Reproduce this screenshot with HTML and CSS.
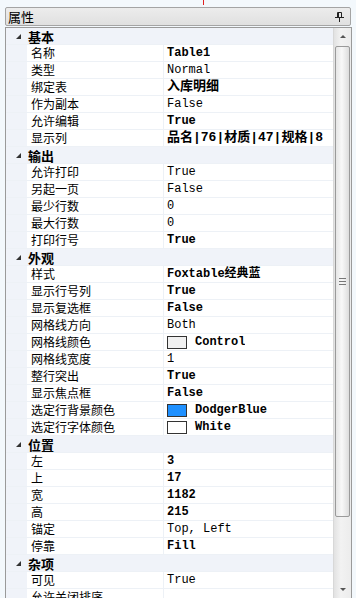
FILE: index.html
```html
<!DOCTYPE html>
<html lang="zh-CN">
<head>
  <meta charset="UTF-8" />
  <title>属性</title>
  <link rel="stylesheet" href="styles.css">
</head>
<body>
  <div class="mark"></div>
  <div class="titlebar">
    <span>属性</span>
    <svg class="pin" width="9" height="10" viewBox="0 0 9 10">
      <path d="M2.5 0.5h4v5h-4z M3.5 1v4.5" fill="none" stroke="#222" stroke-width="1"/>
      <path d="M0 5.5h9 M4.5 5.5v4.5" stroke="#222" stroke-width="1"/>
    </svg>
  </div>
  <div class="grid">
    <div class="rows">
      <div class="cat"><i class="tri"></i><span>基本</span></div>
      <div class="row"><span class="name">名称</span><span class="val b">Table1</span></div>
      <div class="row"><span class="name">类型</span><span class="val">Normal</span></div>
      <div class="row"><span class="name">绑定表</span><span class="val b zh">入库明细</span></div>
      <div class="row"><span class="name">作为副本</span><span class="val">False</span></div>
      <div class="row"><span class="name">允许编辑</span><span class="val b">True</span></div>
      <div class="row"><span class="name">显示列</span><span class="val b zh">品名|76|材质|47|规格|8</span></div>

      <div class="cat"><i class="tri"></i><span>输出</span></div>
      <div class="row"><span class="name">允许打印</span><span class="val">True</span></div>
      <div class="row"><span class="name">另起一页</span><span class="val">False</span></div>
      <div class="row"><span class="name">最少行数</span><span class="val">0</span></div>
      <div class="row"><span class="name">最大行数</span><span class="val">0</span></div>
      <div class="row"><span class="name">打印行号</span><span class="val b">True</span></div>

      <div class="cat"><i class="tri"></i><span>外观</span></div>
      <div class="row"><span class="name">样式</span><span class="val b">Foxtable经典蓝</span></div>
      <div class="row"><span class="name">显示行号列</span><span class="val b">True</span></div>
      <div class="row"><span class="name">显示复选框</span><span class="val b">False</span></div>
      <div class="row"><span class="name">网格线方向</span><span class="val">Both</span></div>
      <div class="row"><span class="name">网格线颜色</span><span class="val b"><i class="swatch control"></i>Control</span></div>
      <div class="row"><span class="name">网格线宽度</span><span class="val">1</span></div>
      <div class="row"><span class="name">整行突出</span><span class="val b">True</span></div>
      <div class="row"><span class="name">显示焦点框</span><span class="val b">False</span></div>
      <div class="row"><span class="name">选定行背景颜色</span><span class="val b"><i class="swatch blue"></i>DodgerBlue</span></div>
      <div class="row"><span class="name">选定行字体颜色</span><span class="val b"><i class="swatch white"></i>White</span></div>

      <div class="cat"><i class="tri"></i><span>位置</span></div>
      <div class="row"><span class="name">左</span><span class="val b">3</span></div>
      <div class="row"><span class="name">上</span><span class="val b">17</span></div>
      <div class="row"><span class="name">宽</span><span class="val b">1182</span></div>
      <div class="row"><span class="name">高</span><span class="val b">215</span></div>
      <div class="row"><span class="name">锚定</span><span class="val">Top, Left</span></div>
      <div class="row"><span class="name">停靠</span><span class="val b">Fill</span></div>

      <div class="cat"><i class="tri"></i><span>杂项</span></div>
      <div class="row"><span class="name">可见</span><span class="val">True</span></div>
      <div class="row"><span class="name">允许关闭排序</span><span class="val"></span></div>
    </div>
    <div class="scrollbar">
      <div class="arrow up"></div>
      <div class="track">
        <div class="thumb"><span class="grip"></span></div>
      </div>
      <div class="arrow down"></div>
    </div>
  </div>
</body>
</html>
```

FILE: styles.css
```css
body {
  margin: 0;
  width: 356px;
  height: 598px;
  overflow: hidden;
  background: #f3f8fc;
  font-family: "Noto Sans CJK SC", sans-serif;
  font-size: 12px;
  color: #000;
  position: relative;
}
.mark {
  position: absolute;
  left: 203px;
  top: 0;
  width: 1px;
  height: 5px;
  background: #e02020;
}
.titlebar {
  margin: 7px 0 0 5px;
  height: 17px;
  border: 1px solid #a4a4a4;
  border-radius: 2px;
  background: linear-gradient(#ececec, #e0e0e0);
  display: flex;
  align-items: center;
  justify-content: space-between;
  padding: 0 6px 0 2px;
  box-sizing: content-box;
  width: 336px;
  line-height: 17px;
}
.titlebar span {
  font-size: 13px;
}
.grid {
  margin: 1px 0 0 5px;
  width: 345px;
  height: 570px;
  border: 1px solid #9a9a9a;
  border-bottom: 1px solid #a0a0a0;
  display: flex;
  background: #fff;
  overflow: hidden;
}
.rows {
  width: 328px;
  overflow: hidden;
}
.cat, .row {
  height: 16px;
  border-bottom: 1px solid #edf1f6;
  display: flex;
  align-items: center;
  white-space: nowrap;
}
.cat {
  background: #f0f3f9;
  font-weight: bold;
}
.tri {
  width: 0;
  height: 0;
  margin: 0 7px 0 10px;
  border-left: 5px solid transparent;
  border-bottom: 5px solid #333;
}
.cat span {
  font-size: 13px;
}
.row {
  background: linear-gradient(to right, #f0f3f9 21px, #fff 21px);
}
.name {
  width: 158px;
  padding-left: 25px;
  box-sizing: border-box;
  height: 16px;
  line-height: 16px;
  border-right: 1px solid #edf1f6;
  flex-shrink: 0;
}
.val {
  padding-left: 3px;
  font-family: "Liberation Mono", "Noto Sans CJK SC", monospace;
  font-size: 12px;
  line-height: 16px;
  display: flex;
  align-items: center;
  overflow: hidden;
}
.val.b {
  font-weight: bold;
}
.val.zh {
  font-size: 13px;
}
.swatch {
  border: 1px solid #333;
  margin-right: 8px;
  box-sizing: border-box;
  width: 20px;
  height: 13px;
}
.swatch.control { background: #f0f0f0; }
.swatch.blue { background: #1e90ff; }
.swatch.white { background: #fff; }
.scrollbar {
  width: 17px;
  display: flex;
  flex-direction: column;
  background: linear-gradient(to right, #e2e2e2, #f2f2f2 40%, #ececec);
  border-left: 1px solid #d8d8d8;
}
.arrow {
  height: 17px;
  display: flex;
  align-items: center;
  justify-content: center;
}
.arrow::before {
  content: "";
  border-left: 3px solid transparent;
  border-right: 3px solid transparent;
}
.arrow.up::before { border-bottom: 3px solid #555; }
.arrow.down::before { border-top: 3px solid #555; }
.track {
  flex: 1;
  padding: 1px 0;
}
.thumb {
  height: 469px;
  margin: 0 1px;
  border: 1px solid #9a9a9a;
  border-radius: 2px;
  background: linear-gradient(to right, #e6e6e6, #f8f8f8 45%, #dcdcdc);
  display: flex;
  align-items: center;
  justify-content: center;
}
.grip {
  width: 7px;
  height: 5px;
  border-top: 1px solid #777;
  border-bottom: 1px solid #777;
  position: relative;
}
.grip::after {
  content: "";
  position: absolute;
  left: 0;
  right: 0;
  top: 2px;
  border-top: 1px solid #777;
}
```
